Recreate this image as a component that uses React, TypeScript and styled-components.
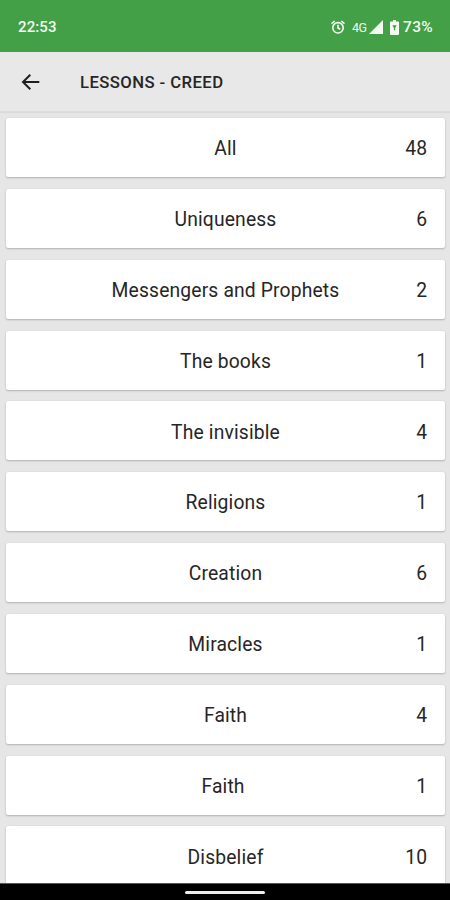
import React from 'react';
import styled, { createGlobalStyle } from 'styled-components';

const GlobalStyle = createGlobalStyle`
  * { box-sizing: border-box; }
  body { margin: 0; background: #e6e6e6; font-family: Roboto, "Liberation Sans", sans-serif; }
`;

const Screen = styled.div`
  width: 450px;
  height: 900px;
  display: flex;
  flex-direction: column;
  overflow: hidden;
  background: #e6e6e6;
`;

const StatusBar = styled.header`
  flex: none;
  height: 52px;
  padding: 2px 17px 0 18px;
  display: flex;
  align-items: center;
  justify-content: space-between;
  background: #43a047;
  color: #f4fbf2;
`;

const Clock = styled.span`
  font-size: 15px;
  font-weight: 500;
  letter-spacing: 0.1px;
`;

const Indicators = styled.div`
  display: flex;
  align-items: center;
`;

const Network = styled.span`
  margin-left: 7px;
  width: 17px;
  font-size: 12.5px;
  font-weight: 400;
  letter-spacing: -0.5px;
`;

const Battery = styled.span`
  margin-left: 4px;
  font-size: 15.5px;
  font-weight: 500;
  letter-spacing: 0.3px;
`;

const SignalIcon = styled.svg`
  margin-right: 7px;
`;

const Toolbar = styled.nav`
  flex: none;
  height: 60px;
  padding: 2px 20px 0;
  display: flex;
  align-items: center;
  gap: 39px;
  background: #e8e8e8;
  border-bottom: 1px solid #dcdcdc;
  box-shadow: 0 1px 1px rgba(0, 0, 0, 0.05);
`;

const BackButton = styled.button`
  display: flex;
  padding: 0 0 2px;
  border: 0;
  background: none;
  color: #202020;
`;

const Title = styled.h1`
  margin: 0;
  padding-top: 1px;
  font-size: 16.7px;
  font-weight: 500;
  line-height: 24px;
  letter-spacing: 0.42px;
  color: #262626;
`;

const LessonList = styled.ul`
  flex: 1;
  min-height: 0;
  margin: 0;
  padding: 6px 5px 0 6px;
  display: flex;
  flex-direction: column;
  gap: 11.85px;
  overflow: hidden;
  list-style: none;
`;

const LessonCard = styled.li`
  flex: none;
  height: 59px;
  padding: 3.4px 18px 0;
  display: grid;
  grid-template-columns: 40px 1fr 40px;
  align-items: center;
  background: #fff;
  border-radius: 2px;
  box-shadow: 0 1px 2px rgba(0, 0, 0, 0.22), 0 0 1px rgba(0, 0, 0, 0.12);
  color: #262626;
  font-size: 19.3px;
  line-height: 24px;
`;

const LessonName = styled.span`
  grid-column: 2;
  text-align: center;
  letter-spacing: 0.15px;
  white-space: pre;
`;

const LessonCount = styled.span`
  text-align: right;
`;

const NavigationBar = styled.footer`
  flex: none;
  height: 17px;
  padding-top: 1px;
  display: flex;
  align-items: center;
  justify-content: center;
  background: #000;
  border-top: 1px solid #555;
`;

const HomeHandle = styled.div`
  width: 80px;
  height: 3px;
  border-radius: 2px;
  background: #eee;
`;

const lessons = [
  { name: 'All', count: 48 },
  { name: 'Uniqueness', count: 6 },
  { name: 'Messengers and Prophets', count: 2 },
  { name: 'The books', count: 1 },
  { name: 'The invisible', count: 4 },
  { name: 'Religions', count: 1 },
  { name: 'Creation', count: 6 },
  { name: 'Miracles', count: 1 },
  { name: 'Faith', count: 4 },
  { name: 'Faith\u00a0', count: 1 },
  { name: 'Disbelief', count: 10 },
];

export default function App() {
  return (
    <Screen>
      <GlobalStyle />
      <StatusBar>
        <Clock>22:53</Clock>
        <Indicators>
          <svg width="14" height="14" viewBox="0 0 14 14" fill="none" stroke="currentColor" strokeWidth="1.6">
            <circle cx="7" cy="7.8" r="5.2" />
            <path d="M7 4.800V8l2.200 1.300M.5 3.700 3.700 1M13.500 3.700l-3.200-2.700" />
          </svg>
          <Network>4G</Network>
          <SignalIcon width="14" height="14" viewBox="0 0 14 14" fill="currentColor">
            <path d="M14 0v14H0z" />
          </SignalIcon>
          <svg width="9" height="15" viewBox="0 0 9 15" fill="currentColor">
            <path d="M3 0h3v1.500h2q1 0 1 1V14q0 1-1 1H1q-1 0-1-1V2.500q0-1 1-1h2z" />
            <path d="M2.300 5.200h4.400L5.200 8v2.300H3.900V8z" fill="#43a047" />
          </svg>
          <Battery>73%</Battery>
        </Indicators>
      </StatusBar>
      <Toolbar>
        <BackButton aria-label="Back">
          <svg width="21" height="20" viewBox="0 0 21 20" fill="none" stroke="currentColor" strokeWidth="2">
            <path d="M19.300 10H3.300M10.300 2.700 3 10l7.300 7.300" />
          </svg>
        </BackButton>
        <Title>LESSONS - CREED</Title>
      </Toolbar>
      <LessonList>
        {lessons.map((lesson, index) => (
          <LessonCard key={index}>
            <LessonName>{lesson.name}</LessonName>
            <LessonCount>{lesson.count}</LessonCount>
          </LessonCard>
        ))}
      </LessonList>
      <NavigationBar>
        <HomeHandle />
      </NavigationBar>
    </Screen>
  );
}
